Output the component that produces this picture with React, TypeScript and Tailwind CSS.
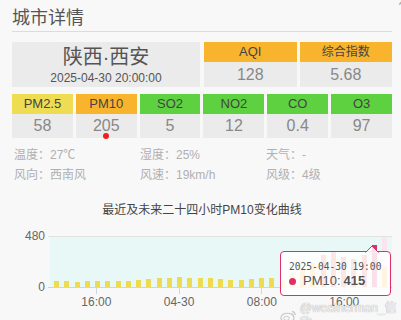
import React from "react";

const bars = [
	56, 56, 47, 56, 56, 56, 56, 56, 66, 75, 85, 85, 94, 85, 85, 85, 75, 66, 66, 75,
	85, 85, 70, 130, 180, 230, 300, 330, 280, 260, 300, 400, 190,
];

const ticks: Record<number, string> = { 4: "16:00", 12: "04-30", 20: "08:00", 28: "16:00" };

const barColor = (v: number) =>
	v <= 150 ? "bg-[#eedb4f]" : v <= 250 ? "bg-[#f8b42c]" : v <= 350 ? "bg-[#ec5f5f]" : "bg-[#d8336f]";

const pollutants = [
	{ name: "PM2.5", value: "58", head: "bg-[#eedd52]" },
	{ name: "PM10", value: "205", head: "bg-[#f8b42c]", dot: true },
	{ name: "SO2", value: "5", head: "bg-[#5dd13f]" },
	{ name: "NO2", value: "12", head: "bg-[#5dd13f]" },
	{ name: "CO", value: "0.4", head: "bg-[#5dd13f]" },
	{ name: "O3", value: "97", head: "bg-[#5dd13f]" },
];

const info = [
	"温度：27℃",
	"湿度：25%",
	"天气：-",
	"风向：西南风",
	"风速：19km/h",
	"风级：4级",
];

const App = () => {
	return (
		<div
			className="relative w-[401px] h-[320px] overflow-hidden bg-[#f8f8f8] pl-[12px] pr-[9px] text-[#555]"
			style={{ fontFamily: '"Liberation Sans", "Noto Sans CJK SC", sans-serif' }}
		>
			<div className="absolute right-[-7px] top-[-8px] text-[18px] leading-[18px] text-[#aaa]">×</div>

			<div className="pt-[5px] h-[32px] leading-[26px] text-[18px] border-b border-[#dcdcdc]">城市详情</div>

			<div className="mt-[10px] flex gap-[4px] h-[45px]">
				<div className="w-[188px] bg-[#ebebeb] flex flex-col items-center pt-[3px]">
					<div className="text-[20px] leading-[24px]">陕西·西安</div>
					<div className="text-[12px] leading-[14px] mt-[2px]">2025-04-30 20:00:00</div>
				</div>
				<div className="flex-1 flex gap-[3px]">
					<div className="flex-1 flex flex-col text-center">
						<div className="h-[20px] leading-[20px] bg-[#f8b42c] text-[13px] text-[#444]">AQI</div>
						<div className="h-[25px] leading-[25px] bg-[#ebebeb] text-[16px] text-[#888]">128</div>
					</div>
					<div className="flex-1 flex flex-col text-center">
						<div className="h-[20px] leading-[20px] bg-[#f8b42c] text-[12px] text-[#444]">综合指数</div>
						<div className="h-[25px] leading-[25px] bg-[#ebebeb] text-[16px] text-[#888]">5.68</div>
					</div>
				</div>
			</div>

			<div className="mt-[7px] grid grid-cols-6 gap-[3px]">
				{pollutants.map((p) => (
					<div key={p.name} className="flex flex-col text-center">
						<div className={`h-[20px] leading-[20px] text-[13px] text-[#444] ${p.head}`}>{p.name}</div>
						<div className="relative h-[24px] leading-[24px] bg-[#ebebeb] text-[16px] text-[#888]">
							{p.value}
							{p.dot && (
								<div className="absolute left-1/2 -translate-x-1/2 bottom-[-1px] w-[6px] h-[6px] rounded-full bg-[#f01e1e]"></div>
							)}
						</div>
					</div>
				))}
			</div>

			<div className="mt-[7px] grid grid-cols-3 pl-[2px] text-[12px] leading-[20px] text-[#b0b0b0]">
				{info.map((t) => (
					<div key={t}>{t}</div>
				))}
			</div>

			<div className="mt-[18px] text-center text-[12px] leading-[14px] text-[#444]">
				最近及未来二十四小时PM10变化曲线
			</div>

			<div className="relative mt-[12px] flex">
				<div className="w-[36px] h-[65px] flex flex-col justify-between text-right pr-[3px] text-[12px] leading-[14px] text-[#666]">
					<div>480</div>
					<div>0</div>
				</div>
				<div className="flex-1 mt-[7px]">
					<div className="border-t border-[#e2e2e2]"></div>
					<div className="ml-[2px] h-[50px] bg-[#e8f8f6]">
						<div className="ml-[1.4px] w-[338px] h-full flex items-end">
							{bars.map((v, i) => (
								<div key={i} className="flex-1 h-full flex justify-center items-end">
									{i === 32 ? (
										<div className="w-[5px] h-full bg-[#fbe4ee] flex items-end">
											<div className={`w-[5px] ${barColor(v)}`} style={{ height: (v / 480) * 51 }}></div>
										</div>
									) : (
										<div className={`w-[5px] ${barColor(v)}`} style={{ height: (v / 480) * 51 }}></div>
									)}
								</div>
							))}
						</div>
					</div>
					<div className="border-t border-[#cdd4e4]"></div>
					<div className="ml-[3.4px] w-[338px] flex">
						{bars.map((_, i) => (
							<div key={i} className="flex-1 flex flex-col items-center">
								{ticks[i] ? (
									<>
										<div className="w-[1px] h-[6px] bg-[#cdd4e4]"></div>
										<div className="mt-[1px] whitespace-nowrap text-[12px] leading-[14px] text-[#666]">
											{ticks[i]}
										</div>
									</>
								) : null}
							</div>
						))}
					</div>
				</div>

				<div className="absolute left-[268px] top-[22px] w-[111px] h-[45px] rounded-[4px] border border-[#df2f68] bg-white/85 pl-[8px] pt-[8px]">
					<svg className="absolute left-[84px] top-[-7px]" width="14" height="8" viewBox="0 0 14 8">
						<path d="M0.5 7.5 L7 1 L13.5 7.5" fill="rgba(255,255,255,0.85)" stroke="#df2f68" strokeWidth="1" />
					</svg>
					<div
						className="text-[9.6px] leading-[14px] text-[#555]"
						style={{ fontFamily: '"DejaVu Sans Mono", monospace' }}
					>
						2025-04-30 19:00
					</div>
					<div className="mt-[-1px] flex items-center text-[13px] leading-[16px] text-[#555]">
						<div className="w-[7px] h-[7px] rounded-full bg-[#df2f68] mr-[7px]"></div>
						<span>PM10: </span>
						<span className="font-bold ml-[3px]">415</span>
					</div>
				</div>
			</div>

			<div className="absolute left-[280px] top-[301px] flex items-center gap-[3px]">
				<svg width="18" height="15" viewBox="0 0 18 15">
					<ellipse cx="8" cy="9" rx="7" ry="5" fill="none" stroke="#c8c8c8" strokeWidth="1.3" />
					<ellipse cx="7" cy="9.5" rx="3" ry="2.2" fill="none" stroke="#c8c8c8" strokeWidth="1" />
					<path d="M13 2 Q16 2.5 16.5 6" fill="none" stroke="#c8c8c8" strokeWidth="1.2" />
					<path d="M12.5 4.3 Q14.3 4.6 14.6 6.4" fill="none" stroke="#c8c8c8" strokeWidth="1" />
				</svg>
				<span className="text-[12px] leading-[15px] text-[#f4f4f4] [text-shadow:0_0_1px_rgba(0,0,0,0.45)]">
					@weatherman_信欣
				</span>
			</div>
		</div>
	);
};

export default App;
